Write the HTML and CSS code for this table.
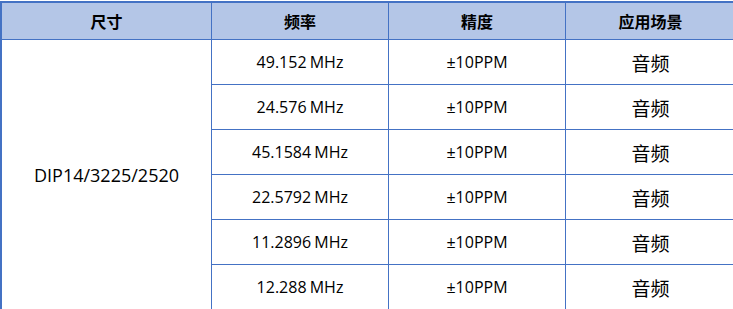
FILE: index.html
```html
<!DOCTYPE html>
<html lang="zh-CN">
<head>
<meta charset="utf-8">
<link rel="stylesheet" href="styles.css">
</head>
<body>
<div class="table">
  <div class="cell head">尺寸</div>
  <div class="cell head">频率</div>
  <div class="cell head">精度</div>
  <div class="cell head">应用场景</div>
  <div class="cell size">DIP14/3225/2520</div>
  <div class="cell">49.152 MHz</div><div class="cell">±10PPM</div><div class="cell app">音频</div>
  <div class="cell">24.576 MHz</div><div class="cell">±10PPM</div><div class="cell app">音频</div>
  <div class="cell">45.1584 MHz</div><div class="cell">±10PPM</div><div class="cell app">音频</div>
  <div class="cell">22.5792 MHz</div><div class="cell">±10PPM</div><div class="cell app">音频</div>
  <div class="cell">11.2896 MHz</div><div class="cell">±10PPM</div><div class="cell app">音频</div>
  <div class="cell">12.288 MHz</div><div class="cell">±10PPM</div><div class="cell app">音频</div>
</div>
</body>
</html>
```
FILE: styles.css
```css
html, body {
  margin: 0;
  padding: 0;
  background: #ffffff;
  overflow: hidden;
}
body {
  padding-top: 1px;
  font-family: "Open Sans", "Noto Sans CJK SC", sans-serif;
  color: #000;
}
.table {
  width: 734px;
  display: grid;
  grid-template-columns: 210px 177px 177px 1fr;
  grid-template-rows: 37px repeat(6, 45px);
  border-top: 2px solid #4472c4;
  border-left: 2px solid #4472c4;
}
.cell {
  box-sizing: border-box;
  border-right: 1px solid #4472c4;
  border-bottom: 1px solid #4472c4;
  display: flex;
  align-items: center;
  justify-content: center;
  font-size: 16px;
  word-spacing: -1px;
}
.head {
  background: #b4c6e7;
  font-family: "Noto Sans CJK SC", sans-serif;
  font-weight: bold;
  font-size: 16px;
}
.size {
  grid-row: span 6;
  font-size: 18px;
}
.app {
  font-family: "Noto Sans CJK SC", sans-serif;
  font-size: 19px;
}
```
